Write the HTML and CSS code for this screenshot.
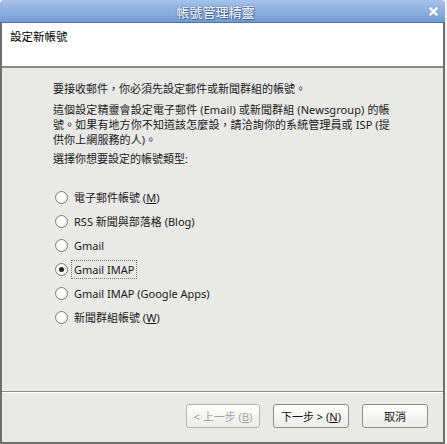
FILE: index.html
```html
<!DOCTYPE html>
<html lang="zh-Hant">
<head>
<meta charset="utf-8">
<link rel="stylesheet" href="styles.css">
</head>
<body>
<div class="window">
  <div class="titlebar">
    <span class="title">帳號管理精靈</span>
    <svg class="close" width="9" height="9" viewBox="0 0 9 9"><path d="M1.5 1.5 L7.5 7.5 M7.5 1.5 L1.5 7.5" stroke="#fff" stroke-width="2.2" stroke-linecap="square"/></svg>
  </div>
  <div class="header">設定新帳號</div>
  <div class="content">
    <p class="p1">要接收郵件，你必須先設定郵件或新聞群組的帳號。</p>
    <p class="p2">這個設定精靈會設定電子郵件 (Email) 或新聞群組 (Newsgroup) 的帳<br>號。如果有地方你不知道該怎麼設，請洽詢你的系統管理員或 ISP (提<br>供你上網服務的人)。</p>
    <p class="p3">選擇你想要設定的帳號類型:</p>
    <ul class="options">
      <li class="opt"><span class="radio"></span><span class="label">電子郵件帳號 (<u>M</u>)</span></li>
      <li class="opt"><span class="radio"></span><span class="label">RSS 新聞與部落格 (Blog)</span></li>
      <li class="opt"><span class="radio"></span><span class="label">Gmail</span></li>
      <li class="opt"><span class="radio checked"></span><span class="label focus">Gmail IMAP</span></li>
      <li class="opt"><span class="radio"></span><span class="label">Gmail IMAP (Google Apps)</span></li>
      <li class="opt"><span class="radio"></span><span class="label">新聞群組帳號 (<u>W</u>)</span></li>
    </ul>
  </div>
  <div class="footer">
    <button class="btn disabled">&lt; 上一步 (<u>B</u>)</button>
    <button class="btn next">下一步 &gt; (<u>N</u>)</button>
    <button class="btn cancel">取消</button>
  </div>
</div>
</body>
</html>
```
FILE: styles.css
```css
html, body {
  margin: 0;
  padding: 0;
  background: #f4f4f4;
}
body {
  font-family: "Noto Sans", "Noto Sans CJK TC", sans-serif;
  font-size: 11px;
  color: #1a1a1a;
}
.window {
  width: 445px;
  height: 444px;
  box-sizing: border-box;
  display: flex;
  flex-direction: column;
  background: #e9e9e7;
  border-left: 2px solid #6e6e6e;
  border-right: 2px solid #6e6e6e;
  border-bottom: 2px solid #6e6e6e;
  border-radius: 5px 5px 0 0;
}
.titlebar {
  height: 22px;
  margin: 0 -2px;
  flex: none;
  display: flex;
  align-items: center;
  justify-content: center;
  position: relative;
  background: linear-gradient(#a6c3ea, #749cd2);
  border-bottom: 1px solid #4d73a8;
  border-radius: 5px 5px 0 0;
}
.title {
  color: #fff;
  font-size: 13px;
  margin-left: -14px;
  text-shadow: 0 0 2px #3d5f90, 1px 1px 1px #3d5f90;
  font-family: "Noto Sans CJK TC", sans-serif;
}
.close {
  position: absolute;
  right: 7px;
  top: 7px;
}
.header {
  flex: none;
  height: 45px;
  background: #fff;
  border-bottom: 2px solid #8a8a8a;
  padding: 5px 0 0 8px;
  box-sizing: border-box;
  font-family: "Noto Sans CJK TC", sans-serif;
  font-size: 11.5px;
  line-height: 16px;
  color: #000;
}
.content {
  flex: 1;
  padding: 13px 0 0 51px;
  border-bottom: 1px solid #8c8c8c;
  box-shadow: 0 1px 0 #fff;
}
.content p {
  margin: 0;
  line-height: 16px;
  white-space: nowrap;
}
.p1 { margin-bottom: 5px !important; }
.p2 { line-height: 15px !important; margin-bottom: 4px !important; letter-spacing: 0.1px; }
.options {
  list-style: none;
  margin: 18px 0 0 2px;
  padding: 0;
}
.opt {
  display: flex;
  align-items: center;
  height: 24px;
}
.radio {
  width: 13px;
  height: 13px;
  box-sizing: border-box;
  border: 1px solid #7a7a7a;
  border-radius: 50%;
  background: radial-gradient(circle at 50% 40%, #ffffff, #eeeeee);
  margin-right: 5px;
  display: flex;
  align-items: center;
  justify-content: center;
}
.radio.checked::after {
  content: "";
  width: 5px;
  height: 5px;
  border-radius: 50%;
  background: #222;
}
.label {
  padding: 1px 2px;
  margin-left: -2px;
  border: 1px dotted transparent;
}
.label.focus {
  border-color: #777;
}
.footer {
  flex: none;
  height: 50px;
  display: flex;
  justify-content: flex-end;
  align-items: flex-start;
  gap: 13px;
  padding: 12px 15px 0 0;
  box-sizing: border-box;
}
.btn {
  font-family: "Noto Sans", "Noto Sans CJK TC", sans-serif;
  font-size: 11px;
  height: 24px;
  border: 1px solid #8c8c8c;
  border-radius: 3px;
  background: linear-gradient(#ffffff, #f3f3f1 60%, #ebebe9);
  color: #111;
  padding: 0;
}
.btn.disabled {
  width: 74px;
  color: #a4a4a4;
  border-color: #b4b4b4;
}
.btn.next { width: 76px; }
.btn.cancel { width: 66px; }
```
